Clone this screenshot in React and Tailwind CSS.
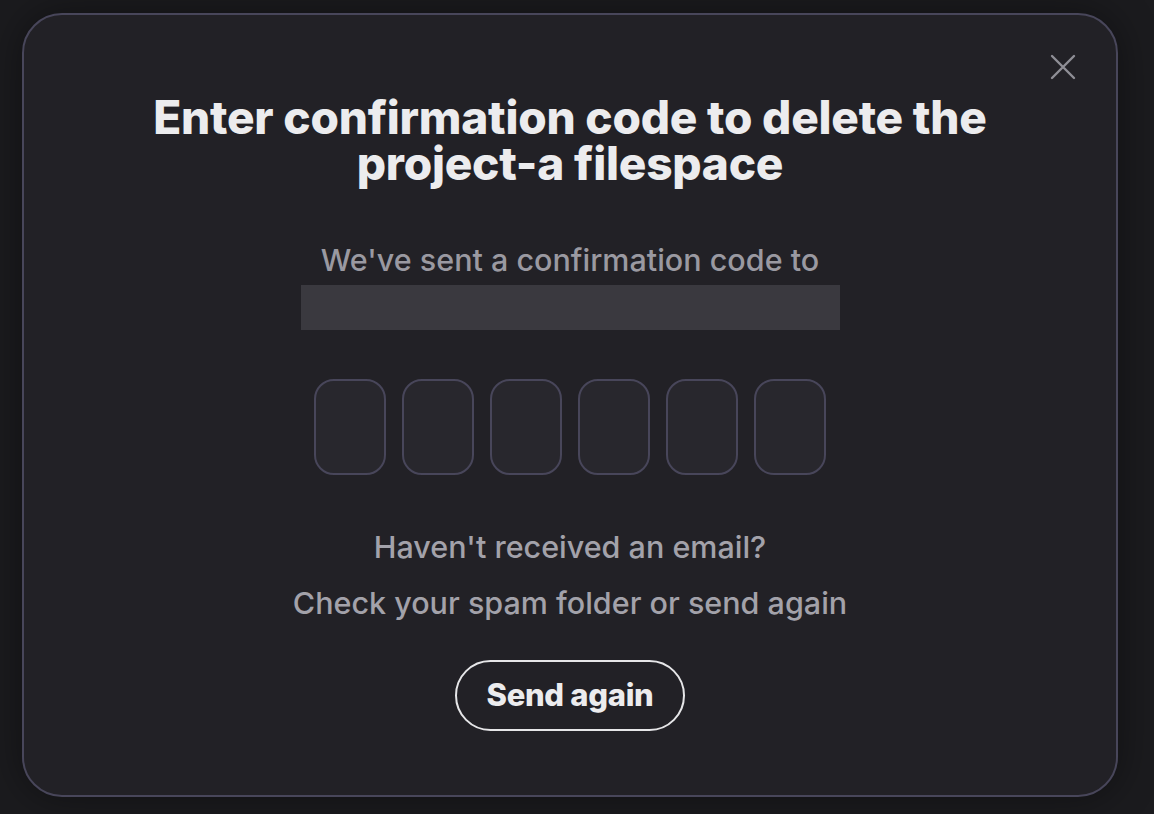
import React from "react";

export default function App() {
  return (
    <div className="w-[1154px] h-[814px] bg-[#1b1b1e] overflow-hidden flex items-start justify-start" style={{ fontFamily: "Inter, 'Noto Sans', sans-serif" }}>
      <div className="relative mt-[13px] ml-[22px] w-[1096px] h-[784px] rounded-[40px] border-2 border-[#48465a] bg-[#222126] flex flex-col items-center shadow-[0_0_40px_rgba(0,0,0,0.4)]">
        <button className="absolute right-[39px] top-[38px] w-[28px] h-[28px] flex items-center justify-center text-[#8f8e96]">
          <svg width="28" height="28" viewBox="0 0 28 28" fill="none" stroke="currentColor" strokeWidth="2.4" strokeLinecap="round">
            <path d="M3 3 L25 25 M25 3 L3 25" />
          </svg>
        </button>
        <h1 className="mt-[79px] text-center text-[46px] leading-[46px] font-extrabold tracking-[-0.005em] text-[#ececee]">
          Enter confirmation code to delete the<br />project-a filespace
        </h1>
        <p className="mt-[57px] text-[30.5px] leading-[34px] font-medium text-[#9a99a1]">We've sent a confirmation code to</p>
        <div className="mt-[8px] w-[539px] h-[45px] bg-[#3a393f]" />
        <div className="mt-[49px] flex gap-[16px]">
          {[0, 1, 2, 3, 4, 5].map((i) => (
            <div key={i} className="w-[72px] h-[96px] rounded-[20px] border-2 border-[#48465a] bg-[#28272d]" />
          ))}
        </div>
        <p className="mt-[52px] text-[30.5px] leading-[40px] font-medium text-[#a3a2aa]">Haven't received an email?</p>
        <p className="mt-[16px] text-[30.5px] leading-[40px] font-medium text-[#a3a2aa]">Check your spam folder or send again</p>
        <button className="mt-[37px] w-[230px] h-[71px] rounded-full border-2 border-[#e6e6e8] text-[31px] font-extrabold text-[#ececee] tracking-[-0.01em]">
          Send again
        </button>
      </div>
    </div>
  );
}
